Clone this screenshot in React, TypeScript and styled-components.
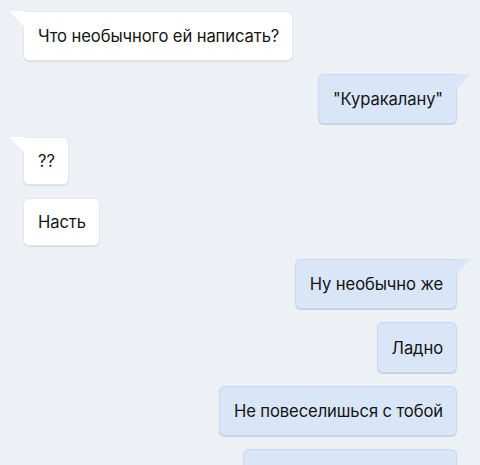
import React from "react";
import styled, { createGlobalStyle, css } from "styled-components";

const Global = createGlobalStyle`
  html, body { margin: 0; padding: 0; background: #edf0f5; }
  body { font-family: Inter, "Noto Sans", Roboto, sans-serif; }
`;

const Chat = styled.div`
  width: 480px;
  height: 465px;
  overflow: hidden;
  box-sizing: border-box;
  padding: 11px 23px 0 23px;
  display: flex;
  flex-direction: column;
  gap: 13px;
  background: #edf0f5;
`;

type Side = { $out?: boolean; $tail?: boolean; $h?: number; $w?: number };

const Bubble = styled.div<Side>`
  position: relative;
  flex-shrink: 0;
  align-self: ${(p) => (p.$out ? "flex-end" : "flex-start")};
  box-sizing: border-box;
  height: ${(p) => p.$h ?? 50}px;
  ${(p) => p.$w && `width: ${p.$w}px;`}
  display: flex;
  align-items: center;
  padding: 0 13px 0 14px;
  border-radius: 6px;
  background: ${(p) => (p.$out ? "#d8e6f8" : "#ffffff")};
  border: 1px solid ${(p) => (p.$out ? "#c9d8ec" : "#e3e7ec")};
  box-shadow: 0 1px 0 ${(p) => (p.$out ? "#c3d0e0" : "#d6dce4")};
  font-size: 16.6px;
  letter-spacing: -0.1px;
  color: #141414;
  white-space: nowrap;
  ${(p) =>
    p.$tail &&
    (p.$out
      ? css`
          border-top-right-radius: 0;
          &::after {
            content: "";
            position: absolute;
            top: -1px;
            right: -14px;
            width: 15px;
            height: 16px;
            background: #d8e6f8;
            clip-path: polygon(0 0, 100% 0, 92% 12%, 1px 100%, 0 100%);
          }
        `
      : css`
          border-top-left-radius: 0;
          &::before {
            content: "";
            position: absolute;
            top: -1px;
            left: -14px;
            width: 15px;
            height: 15px;
            background: #ffffff;
            clip-path: polygon(0 0, 100% 0, 100% 100%, calc(100% - 1px) 100%, 8% 12%);
          }
        `)}
`;

export default function App() {
  return (
    <>
      <Global />
      <Chat>
        <Bubble $tail>Что необычного ей написать?</Bubble>
        <Bubble $out $tail>"Куракалану"</Bubble>
        <Bubble $tail $h={48}>??</Bubble>
        <Bubble $h={48}>Насть</Bubble>
        <Bubble $out $tail>Ну необычно же</Bubble>
        <Bubble $out $h={51}>Ладно</Bubble>
        <Bubble $out>Не повеселишься с тобой</Bubble>
        <Bubble $out $w={214}>&nbsp;</Bubble>
      </Chat>
    </>
  );
}
